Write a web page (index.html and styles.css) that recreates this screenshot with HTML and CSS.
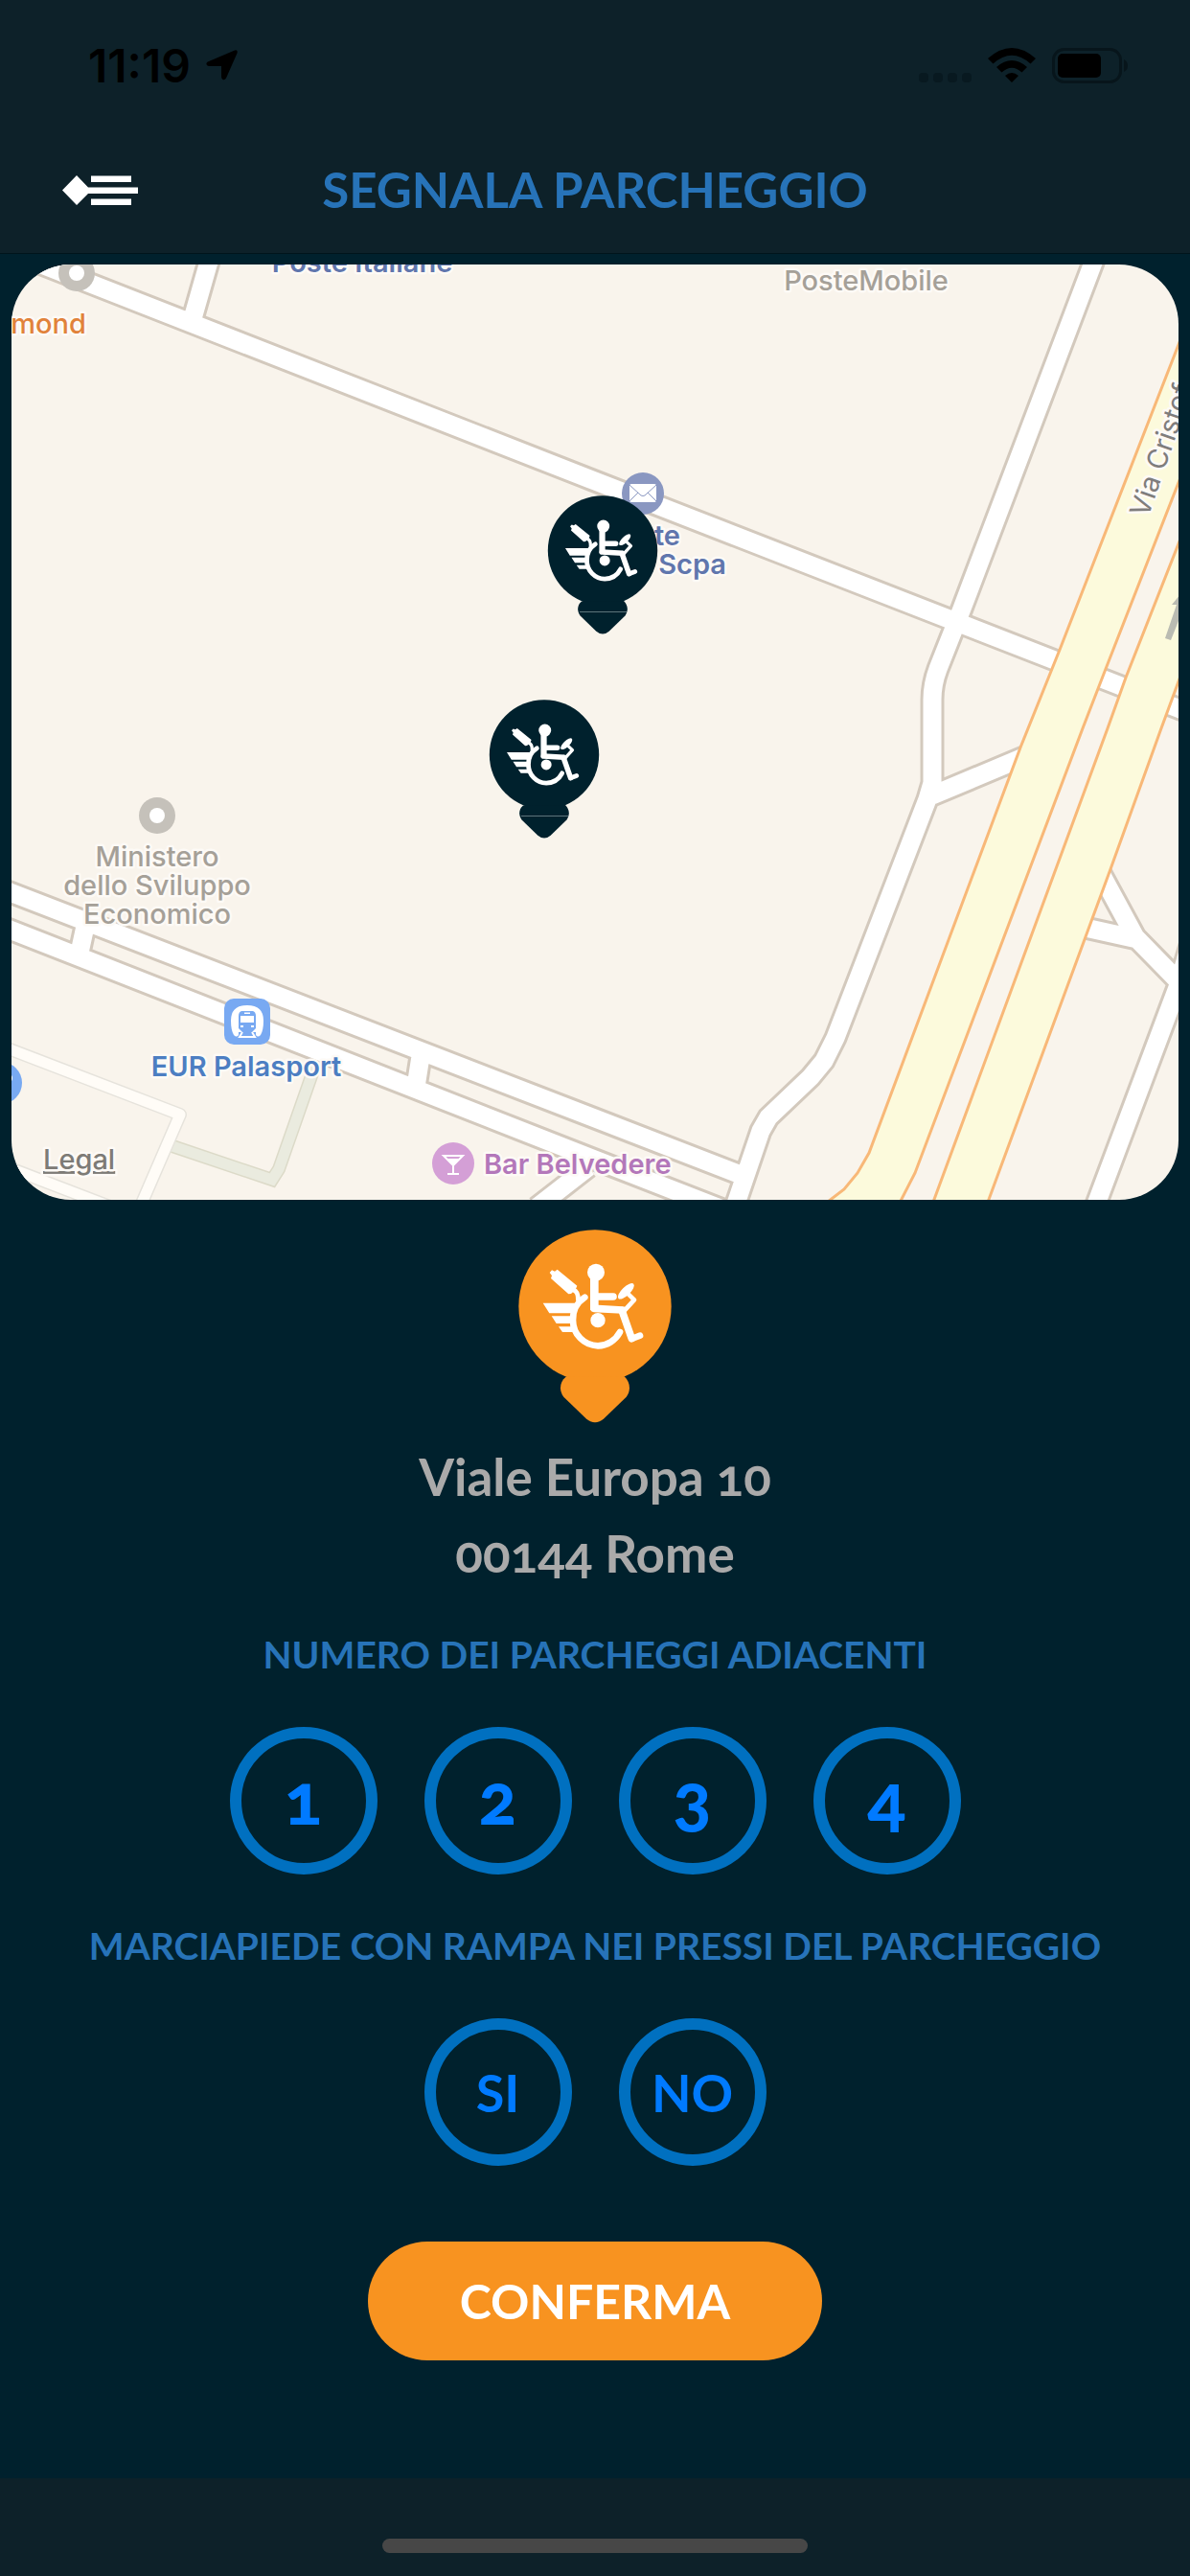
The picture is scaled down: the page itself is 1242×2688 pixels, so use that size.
FILE: index.html
```html
<!DOCTYPE html>
<html lang="it">
<head>
  <meta charset="UTF-8" />
  <meta name="viewport" content="width=device-width, initial-scale=1.0"/>
  <title>Segnala parcheggio</title>
  <link rel="stylesheet" href="styles.css">
</head>
<body>

<!-- shared pin shape, coloured with currentColor -->
<svg class="defs" aria-hidden="true">
  <symbol id="pin" viewBox="64 38 480 606">
    <g fill="currentColor">
      <circle cx="304" cy="278" r="239"/>
      <path d="M212 500C194 514 190 542 206 562L276 630Q304 654 332 630L402 562C416 544 416 518 396 498Z"/>
    </g>
    <g fill="#fff">
      <circle cx="307" cy="172" r="27"/>
      <circle cx="313" cy="322" r="23"/>
      <path d="M141 268H246L230 300H161ZM168 309H232L230 332H183ZM190 342H234L244 359H202Z"/>
      <path d="M162 173L169 165L178 169L186 163L248 214L243 226L229 239L221 240L166 191L169 182Z"/>
      <ellipse cx="401" cy="231" rx="33" ry="13" transform="rotate(-44 401 231)"/>
    </g>
    <g fill="none" stroke="#fff" stroke-linecap="round" stroke-linejoin="round">
      <path stroke-width="20" d="M272 250A82 82 0 0 0 235 322A80 80 0 0 0 313 402A80 80 0 0 0 382 359"/>
      <path stroke-width="14" d="M236 227Q252 232 251 258"/>
      <path stroke-width="26" stroke-linecap="butt" d="M302 180V290"/>
      <path stroke-width="23" d="M304 248H361M301 285L390 290"/>
      <path stroke-width="23" d="M388 291L419 379"/>
      <path stroke-width="20" d="M419 380L445 370"/>
      <path stroke-width="14" d="M406 238L427 258L396 292"/>
    </g>
  </symbol>
</svg>

<header>
  <div class="status-bar">
    <span class="clock">11:19
      <svg width="33" height="32" viewBox="0 0 33 32"><path d="M30 .5Q33.5-.5 32.5 3.5L21 29.5Q19.5 32 17.5 31Q16 30 16 28V17H3Q0 16.5 .5 14Q1 12.5 3 12Z"/></svg>
    </span>
    <span class="indicators">
      <svg width="55" height="37" viewBox="0 0 55 37" fill="#081920"><rect y="26" width="10" height="10" rx="4"/><rect x="15" y="26" width="10" height="10" rx="4"/><rect x="30" y="26" width="10" height="10" rx="4"/><rect x="45" y="26" width="10" height="10" rx="4"/></svg>
      <svg width="50" height="37" viewBox="0 0 50 37"><path d="M0 11Q25-11 50 11L44.5 16.5Q25-1 5.5 16.5ZM9 20Q25 6 41 20L35.5 25.5Q25 16 14.5 25.5ZM18 29Q25 23 32 29L25 36Z"/></svg>
      <svg width="80" height="37" viewBox="0 0 80 37"><rect x="1.5" y="1.5" width="70" height="34" rx="11" fill="none" stroke="#07151b" stroke-width="3"/><rect x="6" y="6" width="45" height="25" rx="5"/><path d="M75 12Q79 14 79 18.5Q79 23 75 25Z" fill="#07151b"/></svg>
    </span>
  </div>
  <div class="nav-bar">
    <button class="menu-btn" aria-label="Menu">
      <svg width="79" height="31" viewBox="0 0 79 31"><path fill="#fff" d="M0 15.5L15 0L27 12.5H79V19H27L15 31ZM30 .5H72V7H30ZM30 24.5H72V31H30Z"/></svg>
    </button>
    <h1>SEGNALA PARCHEGGIO</h1>
  </div>
</header>

<main>
  <svg class="map" viewBox="12 276 1218 976">
    <rect class="land" x="12" y="276" width="1218" height="976"/>

    <!-- paths and small streets -->
    <g class="green-edge"><path id="park" d="M180 1196L284 1231L291 1220L333 1100"/></g>
    <use href="#park" class="green-fill"/>
    <g class="minor-edge"><path id="minor" d="M0 1091L188 1163L146 1260M0 1215L120 1261"/></g>
    <use href="#minor" class="minor-fill"/>

    <!-- streets -->
    <g class="street-edge">
      <path id="streets" d="M0 259L621 502L1242 744M220 266L200 336M1144 266L1004 635L979 698Q973 714 973 730V817L968 834L872 1083L860 1107L846 1124L802 1166L794 1180L766 1262M973 830L1085 783M0 927L621 1167L776 1227M0 966L621 1210L762 1265M90 962L83 994M440 1096L434 1134M560 1260L614 1218M1140 895L1185 978L1231 1025L1142 1262M1110 963L1187 980M1229 1030L1244 980"/>
    </g>
    <use href="#streets" class="street-fill"/>

    <!-- Via Cristoforo Colombo -->
    <g class="highway">
      <path d="M1240 334L1106 678L1065 780L907 1203L895 1224L881 1241L860 1257H938L955 1224L1130 760L1154 698L1240 478Z"/>
      <path d="M1240 542L1175 707L1156 760L973 1257H1030L1159 907L1212 760L1240 684Z"/>
    </g>
    <path fill="#babbb2" d="M1216 666L1222 668L1232 643V620L1223 631H1228Z"/>

    <g class="poi-grey">
      <circle cx="80" cy="285" r="19"/><circle cx="80" cy="285" r="8" class="dot"/>
      <circle cx="164" cy="851" r="19"/><circle cx="164" cy="851" r="8" class="dot"/>
    </g>

    <g>
      <circle cx="671" cy="515" r="22" fill="#8a97c1"/>
      <rect x="657" y="505" width="28" height="19" rx="2" fill="#fff"/>
      <path d="M657 506L669 517Q671 518 673 517L685 506M657 523L666 514M685 523L676 514" fill="none" stroke="#8a97c1"/>
    </g>
    <g>
      <rect x="234" y="1042" width="48" height="48" rx="10" fill="#78a9f2"/>
      <path d="M244 1080Q241 1075 241 1065Q241 1049 258 1049Q275 1049 275 1065Q275 1075 272 1080Q269 1083 267 1080V1077H249V1080Q247 1083 244 1080Z" fill="#fff"/>
      <path d="M253 1077L250 1082H266L263 1077" fill="none" stroke="#fff" stroke-width="2"/>
      <path d="M252 1055H264Q267 1056 267 1060V1073L263 1077H253L249 1073V1060Q249 1056 252 1055Z" fill="#78a9f2"/>
      <path d="M251 1060H265V1067H251ZM255 1056.5H261V1058H255ZM251 1070H254V1072H251ZM262 1070H265V1072H262Z" fill="#fff"/>
    </g>
    <g>
      <circle cx="1" cy="1130" r="22" fill="#78a9f2"/>
      <circle cx="9" cy="1125" r="4" fill="#fff"/>
    </g>
    <g>
      <circle cx="473" cy="1214" r="22" fill="#d49fd6"/>
      <path d="M463 1206H483L473 1216ZM473 1215V1224M467 1225H479" fill="none" stroke="#fff" stroke-width="2"/>
      <path d="M466 1209H480L473 1216Z" fill="#fff"/>
    </g>

    <g class="place">
      <text class="orange" x="90" y="348" text-anchor="end">mond</text>
      <text class="indigo" x="378" y="284" text-anchor="middle">Poste Italiane</text>
      <text x="904" y="303" text-anchor="middle">PosteMobile</text>
      <text class="indigo" x="710" y="569" text-anchor="end">te</text>
      <text class="indigo" x="758" y="599" text-anchor="end">Scpa</text>
      <text x="164" y="904" text-anchor="middle">Ministero</text>
      <text x="164" y="934" text-anchor="middle">dello Sviluppo</text>
      <text x="164" y="964" text-anchor="middle">Economico</text>
      <text class="blue" x="257" y="1123" text-anchor="middle">EUR Palasport</text>
      <text class="purple" x="505" y="1225">Bar Belvedere</text>
      <text class="road-name" transform="translate(1198 541) rotate(-71)">Via Cristof</text>
      <a href="#"><text class="legal" x="45" y="1220">Legal</text></a>
    </g>

    <g class="spot">
      <use href="#pin" x="571" y="517" width="116" height="145"/>
      <path d="M605 638.5H654"/>
      <use href="#pin" x="510" y="730" width="116" height="145"/>
      <path d="M544 851.5H593"/>
    </g>
  </svg>

  <svg class="big-pin" width="160" height="202"><use href="#pin" width="160" height="202"/></svg>

  <address>Viale Europa 10<br>00144 Rome</address>

  <h2 id="countLabel">NUMERO DEI PARCHEGGI ADIACENTI</h2>
  <div class="choices numbers" role="group" aria-labelledby="countLabel">
    <button>1</button>
    <button>2</button>
    <button>3</button>
    <button>4</button>
  </div>

  <h2 id="rampLabel">MARCIAPIEDE CON RAMPA NEI PRESSI DEL PARCHEGGIO</h2>
  <div class="choices" role="group" aria-labelledby="rampLabel">
    <button>SI</button>
    <button>NO</button>
  </div>

  <button class="confirm-btn">CONFERMA</button>
</main>

<footer>
  <div class="home-indicator"></div>
</footer>

</body>
</html>
```
FILE: styles.css
```css
:root {
  --bg: #00212d;
  --bar-bg: #0d2129;
  --title: #2773b8;
  --ring: #0070c0;
  --link: #007aff;
  --orange: #f89320;
}

* {
  margin: 0;
  padding: 0;
  box-sizing: border-box;
}

body {
  background-color: var(--bg);
  min-height: 100vh;
  display: flex;
  flex-direction: column;
  font-family: Lato, 'Open Sans', sans-serif;
  font-weight: bold;
}

button {
  font: inherit;
  background: none;
  border: none;
  cursor: pointer;
}

.defs {
  display: block;
  width: 0;
  height: 0;
}

header {
  background-color: var(--bar-bg);
  border-bottom: 1px solid #00141b;
}

.status-bar {
  height: 132px;
  padding: 4px 64px 0 92px;
  display: flex;
  align-items: center;
  justify-content: space-between;
}

.clock {
  display: flex;
  align-items: center;
  gap: 16px;
  font-family: Inter, sans-serif;
  font-size: 48px;
  font-weight: 600;
}

.indicators {
  display: flex;
  gap: 17px;
}

.nav-bar {
  height: 132px;
  padding: 0 65px;
  display: grid;
  grid-template-columns: 80px 1fr 80px;
  align-items: center;
}

.menu-btn {
  display: flex;
}

h1 {
  color: var(--title);
  font-size: 51px;
  line-height: 60px;
  text-align: center;
}

main {
  flex-grow: 1;
  padding: 11px 12px 40px;
  display: flex;
  flex-direction: column;
  align-items: center;
}

.map {
  display: block;
  width: 100%;
  border-radius: 62px;
}

.land {
  fill: #f9f4ec;
}

/* each road is a wide edge line with a narrower fill line over it */
.street-edge,
.street-fill,
.minor-edge,
.minor-fill,
.green-edge,
.green-fill {
  fill: none;
}

.street-edge { stroke: #d3c9bd; stroke-width: 25px; }
.street-fill { stroke: #fff; stroke-width: 19px; }
.minor-edge { stroke: #e6e3dc; stroke-width: 14px; stroke-linejoin: round; }
.minor-fill { stroke: #fffcf7; stroke-width: 11px; stroke-linejoin: round; }
.green-edge { stroke: #dcdac8; stroke-width: 14px; }
.green-fill { stroke: #eaebdf; stroke-width: 11px; }

.highway {
  fill: #fcfadc;
  stroke: #f8b878;
  stroke-width: 3px;
}

.poi-grey { fill: #c5c1ba; }
.poi-grey .dot { fill: #fff; }

.place {
  font-family: Inter, sans-serif;
  font-size: 29px;
  font-weight: 500;
  fill: #a5a098;
  stroke: #fdfaf6;
  stroke-width: 5px;
  stroke-linejoin: round;
  paint-order: stroke;
}

.place .orange { fill: #e1823a; }
.place .indigo { fill: #6076ad; font-weight: 600; }
.place .blue { fill: #4c7ec2; font-weight: 600; }
.place .purple { fill: #b377ba; font-weight: 600; }
.place .road-name { fill: #7f7d7c; font-weight: 400; }
.place .legal { fill: #7d7b76; text-decoration: underline; }

.spot {
  color: var(--bg);
  stroke-width: 1px;
}

.spot > path {
  stroke: #5f747b;
}

.big-pin {
  color: var(--orange);
  margin-top: 31px;
}

address {
  margin: 16px 0 41px;
  color: #aaa;
  font-size: 53px;
  font-style: normal;
  font-variant-numeric: oldstyle-nums;
  line-height: 80px;
  text-align: center;
}

h2 {
  color: var(--title);
  font-size: 39px;
  line-height: 48px;
  text-align: center;
}

.choices {
  display: flex;
  gap: 49px;
  margin: 52px 0 50px;
}

.choices button {
  width: 154px;
  height: 154px;
  border: 12px solid var(--ring);
  border-radius: 50%;
  color: var(--link);
  font-size: 54px;
}

.numbers button {
  padding-bottom: 8px;
  font-size: 74px;
  font-weight: 900;
  font-variant-numeric: oldstyle-nums;
}

.confirm-btn {
  margin-top: 29px;
  padding: 32px 96px;
  border-radius: 62px;
  background-color: var(--orange);
  color: #fff;
  font-size: 50px;
  line-height: 60px;
}

footer {
  height: 102px;
  padding-top: 63px;
  background-color: var(--bar-bg);
}

.home-indicator {
  width: 444px;
  height: 15px;
  margin: 0 auto;
  border-radius: 8px;
  background-color: #474747;
}
```
